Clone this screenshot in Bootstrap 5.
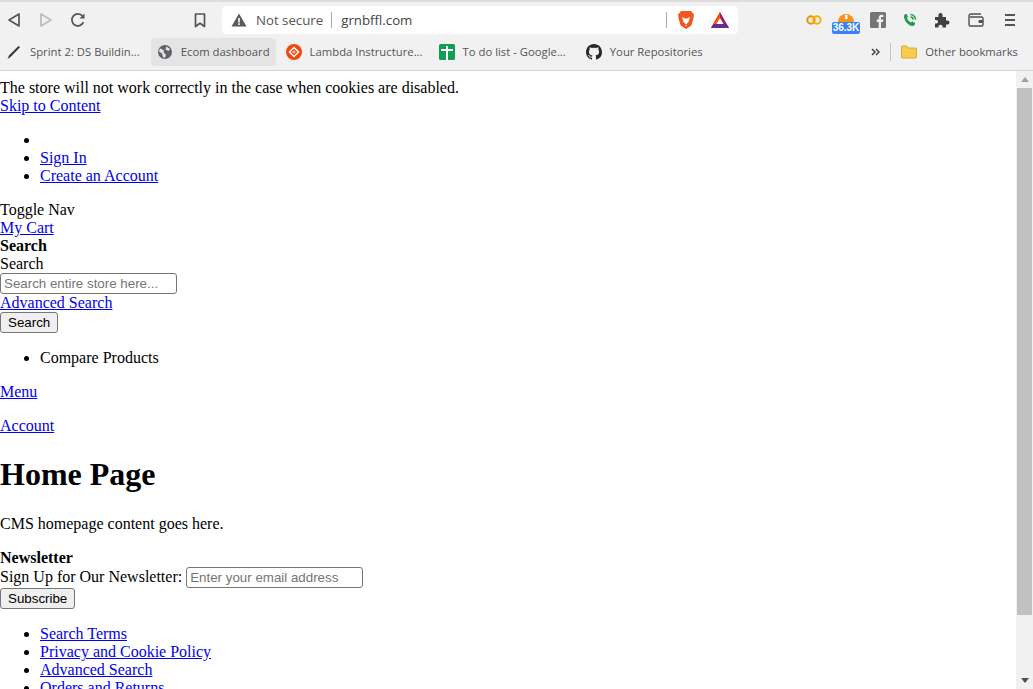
<!DOCTYPE html>
<html lang="en">
<head>
  <meta charset="UTF-8">
  <meta name="viewport" content="width=device-width, initial-scale=1.0">
  <title>Home Page</title>
  <link href="https://cdn.jsdelivr.net/npm/bootstrap@5.3.3/dist/css/bootstrap.min.css" rel="stylesheet">
  <style>
    html, body { height: 100%; overflow: hidden; }
    body { font-family: "Liberation Serif", serif; font-size: 16px; line-height: 18px; color: #000; background: #fff; }

    /* browser frame */
    .frame { height: 71px; background: #f1f1f1; border-bottom: 1px solid #d4d4d4; border-top: 2px solid #dcdcdc; font-family: "Open Sans", "Noto Sans", sans-serif; color: #555; }
    .tool-row { height: 33px; padding-top: 3px; }
    .tool-slot { width: 28px; height: 28px; flex: none; }
    .tool-slot + .tool-slot { margin-left: 4px; }
    .tool-row .slot-mark { margin-left: 94px; }
    .url-box { width: 516px; height: 28px; margin-left: 8px; background: #fff; border-radius: 4px; font-size: 13.25px; padding-left: 9px; flex: none; }
    .url-warn { margin-right: 9px; }
    .url-sep { width: 1px; height: 16px; background: #a8a8a8; margin: 0 9px 0 8px; }
    .url-host { color: #444; }
    .url-end { margin-left: auto; }
    .url-end .url-sep { margin: 0 10px 0 0; }
    .url-bat { margin: 0 9px 0 16px; }
    .slot-co { margin-left: 62px; }
    .tool-row .slot-wallet { margin-left: 6px; }
    .tool-row .slot-menu { margin-left: 6px; }
    .count-tag { position: absolute; left: 0; top: 16px; width: 28px; height: 12px; background: #3b82f6; color: #fff; font: 700 10px/12px "Liberation Sans", sans-serif; text-align: center; border-radius: 2px; }
    .coin-top { margin-top: 6px; }
    .mark-row { height: 28px; margin-top: 3px; font-size: 11.3px; color: #555; }
    .mark-item { height: 28px; padding: 0 6px; border-radius: 4px; white-space: nowrap; flex: none; margin-left: 4px; }
    .mark-item:first-child { margin-left: 0; margin-right: 1px; }
    .mark-item svg { margin-right: 8px; flex: none; }
    .mark-on { background: #e4e4e4; }
    .mark-repo { margin-left: 8px; }
    .mark-more { margin-left: auto; }
    .mark-sep { width: 1px; height: 18px; background: #c4c4c4; margin: 0 0 0 10px; }
    .mark-last { margin-left: 4px; padding-right: 15px; }

    /* page */
    .view { height: 618px; }
    .page { flex: 1 1 auto; min-width: 0; padding-top: 8px; overflow: hidden; }
    .page a { color: #00e; text-decoration: underline; }
    .page ul { margin: 16px 0; padding-left: 40px; }
    .page p { margin: 16px 0; }
    .page h1 { font-family: "Liberation Serif", serif; font-size: 32px; font-weight: 700; line-height: 37px; margin: 21.44px 0; }
    .page b { font-weight: 700; display: block; }
    .page-input { display: block; width: 177px; height: 21px; font: 13.33px/16px "Liberation Sans", sans-serif; border: 1px solid #767676; border-radius: 3px; padding: 1px 3px; }
    .page-input::placeholder { color: #757575; opacity: 1; }
    .news-line { height: 21px; }
    .page-btn { display: block; height: 21px; font: 13.33px/17px "Liberation Sans", sans-serif; color: #000; background: #efefef; border: 1px solid #767676; border-radius: 3px; padding: 0 7px; }
    .scroll-rail { width: 17px; background: #f1f1f1; flex: none; padding: 0 1px; }
    .scroll-arrow { height: 17px; flex: none; }
    .scroll-thumb { height: 527px; background: #c1c1c1; margin-bottom: 57px; }
  </style>
</head>
<body>
  <div class="frame">
    <div class="tool-row d-flex align-items-center">
      <div class="tool-slot d-flex align-items-center justify-content-center">
        <svg width="14" height="16" viewBox="0 0 14 16"><path d="M12 2v12L2 8z" fill="none" stroke="#555" stroke-width="1.7" stroke-linejoin="round"/></svg>
      </div>
      <div class="tool-slot d-flex align-items-center justify-content-center">
        <svg width="14" height="16" viewBox="0 0 14 16"><path d="M2 2v12L12 8z" fill="none" stroke="#bbb" stroke-width="1.7" stroke-linejoin="round"/></svg>
      </div>
      <div class="tool-slot d-flex align-items-center justify-content-center">
        <svg width="16" height="16" viewBox="0 0 16 16"><path d="M13.4 10.2A6 6 0 1 1 12.5 4" fill="none" stroke="#555" stroke-width="1.7"/><path d="M14.5 1.5v5h-5z" fill="#555"/></svg>
      </div>
      <div class="tool-slot slot-mark d-flex align-items-center justify-content-center">
        <svg width="12" height="15" viewBox="0 0 12 15"><path d="M1.5 1h9v12.5L6 10.2 1.5 13.5z" fill="none" stroke="#555" stroke-width="1.7" stroke-linejoin="round"/></svg>
      </div>
      <div class="url-box d-flex align-items-center">
        <svg class="url-warn" width="16" height="14" viewBox="0 0 16 14"><path d="M8 .5 15.5 13.5H.5z" fill="#5a5a5a"/><path d="M7.2 5h1.6v4.4H7.2zM7.2 10.3h1.6v1.6H7.2z" fill="#fff"/></svg>
        <span>Not secure</span>
        <span class="url-sep"></span>
        <span class="url-host">grnbffl.com</span>
        <div class="url-end d-flex align-items-center">
          <span class="url-sep"></span>
          <svg width="18" height="20" viewBox="0 0 18 20"><path d="M4 1h10l2 2.4 1 .6-.6 4.5-2 7L9 19l-5.400-3.500-2-7L1 4l1-.6z" fill="#f1571f"/><path d="M5 7l3 1.500h2L13 7l-1.500 5L9 14.500 6.500 12z" fill="#fff"/><path d="M8 15h2l-1 1.200z" fill="#fff"/></svg>
          <svg class="url-bat" width="18" height="16" viewBox="0 0 18 16"><path d="M9 0 0 16h18z" fill="#9e1f63"/><path d="M9 0 0 16h4.500L9 8z" fill="#ff5000"/><path d="M0 16h18l-2.300-4H2.500z" fill="#662d91"/><path d="M9 6l3.500 6h-7z" fill="#fff"/></svg>
        </div>
      </div>
      <div class="tool-slot slot-co d-flex align-items-center justify-content-center">
        <svg width="16" height="10" viewBox="0 0 16 10"><circle cx="5" cy="5" r="3.700" fill="none" stroke="#f09000" stroke-width="2"/><circle cx="11" cy="5" r="3.700" fill="none" stroke="#f7b000" stroke-width="2"/></svg>
      </div>
      <div class="tool-slot position-relative d-flex justify-content-center">
        <svg class="coin-top" width="16" height="10" viewBox="0 0 16 10"><path d="M0 10a8 8 0 0 1 16 0z" fill="#f7931a"/><path d="M7 3h2.500v4H7z" fill="#fff"/></svg>
        <span class="count-tag">36.3K</span>
      </div>
      <div class="tool-slot d-flex align-items-center justify-content-center">
        <svg width="16" height="16" viewBox="0 0 16 16"><rect width="16" height="16" rx="1.500" fill="#757575"/><path d="M11 16V10h2l.3-2.400H11V6.200c0-.7.2-1.200 1.200-1.200h1.200V2.900C13 2.800 12.500 2.800 11.800 2.800 10 2.800 8.700 3.900 8.700 5.900v1.700H6.700V10h2v6z" fill="#f1f1f1"/></svg>
      </div>
      <div class="tool-slot d-flex align-items-center justify-content-center">
        <svg width="14" height="14" viewBox="0 0 14 14"><path d="M3.500 .8 5 3.800 4 5c.6 1.800 2 3.400 3.800 4.400l1.300-1 3 1.700c.2 1-.6 2.600-2 3C6 13.400 .6 7.500 1 3c.2-1.200 1.300-2.200 2.500-2.200z" fill="#1e9e4a"/><path d="M7.500 1.500A5 5 0 0 1 12.500 6.500M7.500 4A2.500 2.500 0 0 1 10 6.500" fill="none" stroke="#1e9e4a" stroke-width="1.500"/></svg>
      </div>
      <div class="tool-slot d-flex align-items-center justify-content-center">
        <svg width="16" height="16" viewBox="0 0 16 16"><path d="M1 5h3.500C4 2.500 5 1 6.500 1S9 2.500 8.500 5H12v3.500c2.500-.5 3.500.6 3.500 2s-1 2.500-3.500 2V15.500H8.500c.4-2-.6-2.800-2-2.800s-2.400.8-2 2.800H1V11.500c2 .4 3-.5 3-1.800S3 7.600 1 8z" fill="#404040"/></svg>
      </div>
      <div class="tool-slot slot-wallet d-flex align-items-center justify-content-center">
        <svg width="16" height="14" viewBox="0 0 16 14"><path d="M13 1H3a2 2 0 0 0-2 2v8.500a1.500 1.500 0 0 0 1.500 1.500h11a1.500 1.500 0 0 0 1.500-1.500v-6A1.500 1.500 0 0 0 13.500 4H2" fill="none" stroke="#505050" stroke-width="1.400"/><rect x="10.500" y="7" width="4.500" height="3" rx="1" fill="#505050"/></svg>
      </div>
      <div class="tool-slot slot-menu d-flex align-items-center justify-content-center">
        <svg width="10" height="12" viewBox="0 0 10 12"><path d="M0 1h10M0 6h10M0 11h10" stroke="#555" stroke-width="2"/></svg>
      </div>
    </div>
    <div class="mark-row d-flex align-items-center">
      <div class="mark-item d-flex align-items-center">
        <svg width="16" height="16" viewBox="0 0 16 16"><path d="M1.500 15 3 11.500 12.500 2l1.500 1.200L4.500 13z" fill="#333"/></svg>
        <span>Sprint 2: DS Buildin...</span>
      </div>
      <div class="mark-item mark-on d-flex align-items-center">
        <svg width="16" height="16" viewBox="0 0 16 16"><circle cx="8" cy="8" r="7" fill="#5f6368"/><path d="M3 4.500 6.500 6 7 9l2 1.500-1 3.500-2-1-1-3.500-3-2zM9.500 2.500 13 5l-1.500 2-3-1.500z" fill="#e4e4e4"/></svg>
        <span>Ecom dashboard</span>
      </div>
      <div class="mark-item d-flex align-items-center">
        <svg width="16" height="16" viewBox="0 0 16 16"><circle cx="8" cy="8" r="8" fill="#f1490c"/><path d="M8 3.500 12.500 8 8 12.500 3.500 8z" fill="none" stroke="#fff" stroke-width="1.500"/><path d="M8 6.200 9.800 8 8 9.800 6.200 8z" fill="#ffc9a8"/></svg>
        <span>Lambda Instructure...</span>
      </div>
      <div class="mark-item d-flex align-items-center">
        <svg width="16" height="16" viewBox="0 0 16 16"><rect width="16" height="16" rx="1.500" fill="#0f9d58"/><path d="M7 2h2v3h5v2H9v9H7V7H2V5h5z" fill="#fff"/></svg>
        <span>To do list - Google...</span>
      </div>
      <div class="mark-item mark-repo d-flex align-items-center">
        <svg width="16" height="16" viewBox="0 0 16 16"><path d="M8 0C3.580 0 0 3.580 0 8c0 3.540 2.290 6.530 5.470 7.590.4.070.55-.17.55-.38 0-.19-.01-.82-.01-1.490-2.010.37-2.530-.49-2.690-.94-.09-.23-.48-.94-.82-1.130-.28-.15-.68-.52-.01-.53.63-.01 1.080.58 1.230.82.72 1.210 1.870.87 2.330.66.07-.52.28-.87.51-1.070-1.780-.2-3.640-.89-3.640-3.950 0-.87.31-1.590.82-2.150-.08-.2-.36-1.020.08-2.120 0 0 .67-.21 2.200.82.64-.18 1.320-.27 2-.27.68 0 1.360.09 2 .27 1.530-1.040 2.200-.82 2.200-.82.44 1.100.16 1.920.08 2.120.51.56.82 1.270.82 2.150 0 3.070-1.870 3.750-3.650 3.950.29.25.54.73.54 1.480 0 1.070-.01 1.930-.01 2.200 0 .21.15.46.55.38A8.012 8.012 0 0 0 16 8c0-4.420-3.580-8-8-8z" fill="#24292e"/></svg>
        <span>Your Repositories</span>
      </div>
      <div class="mark-more d-flex align-items-center">
        <svg width="9" height="8" viewBox="0 0 9 8"><path d="M1 1l3 3-3 3M5 1l3 3-3 3" fill="none" stroke="#444" stroke-width="1.500"/></svg>
        <span class="mark-sep"></span>
      </div>
      <div class="mark-item mark-last d-flex align-items-center">
        <svg width="16" height="14" viewBox="0 0 16 14"><path d="M.5 2a1 1 0 0 1 1-1h4l1.500 2h7.500a1 1 0 0 1 1 1v8a1 1 0 0 1-1 1h-13a1 1 0 0 1-1-1z" fill="#f7cb4d" stroke="#d9a93a"/></svg>
        <span>Other bookmarks</span>
      </div>
    </div>
  </div>

  <div class="view d-flex">
    <div class="page">
      <div>The store will not work correctly in the case when cookies are disabled.</div>
      <div><a href="#">Skip to Content</a></div>
      <ul>
        <li></li>
        <li><a href="#">Sign In</a></li>
        <li><a href="#">Create an Account</a></li>
      </ul>
      <div>Toggle Nav</div>
      <div><a href="#">My Cart</a></div>
      <b>Search</b>
      <div>Search</div>
      <input class="page-input" type="text" placeholder="Search entire store here...">
      <div><a href="#">Advanced Search</a></div>
      <button class="page-btn" type="button">Search</button>
      <ul>
        <li>Compare Products</li>
      </ul>
      <p><a href="#">Menu</a></p>
      <p><a href="#">Account</a></p>
      <h1>Home Page</h1>
      <p>CMS homepage content goes here.</p>
      <b>Newsletter</b>
      <div class="news-line d-flex align-items-center">Sign Up for Our Newsletter:&nbsp;<input class="page-input" type="email" placeholder="Enter your email address"></div>
      <button class="page-btn" type="button">Subscribe</button>
      <ul>
        <li><a href="#">Search Terms</a></li>
        <li><a href="#">Privacy and Cookie Policy</a></li>
        <li><a href="#">Advanced Search</a></li>
        <li><a href="#">Orders and Returns</a></li>
      </ul>
    </div>
    <div class="scroll-rail d-flex flex-column">
      <div class="scroll-arrow d-flex align-items-center justify-content-center">
        <svg width="8" height="5" viewBox="0 0 8 5"><path d="M4 0l4 5H0z" fill="#a3a3a3"/></svg>
      </div>
      <div class="scroll-thumb"></div>
      <div class="scroll-arrow d-flex align-items-center justify-content-center">
        <svg width="8" height="5" viewBox="0 0 8 5"><path d="M0 0h8L4 5z" fill="#505050"/></svg>
      </div>
    </div>
  </div>

  <script src="https://cdn.jsdelivr.net/npm/bootstrap@5.3.3/dist/js/bootstrap.bundle.min.js"></script>
</body>
</html>
